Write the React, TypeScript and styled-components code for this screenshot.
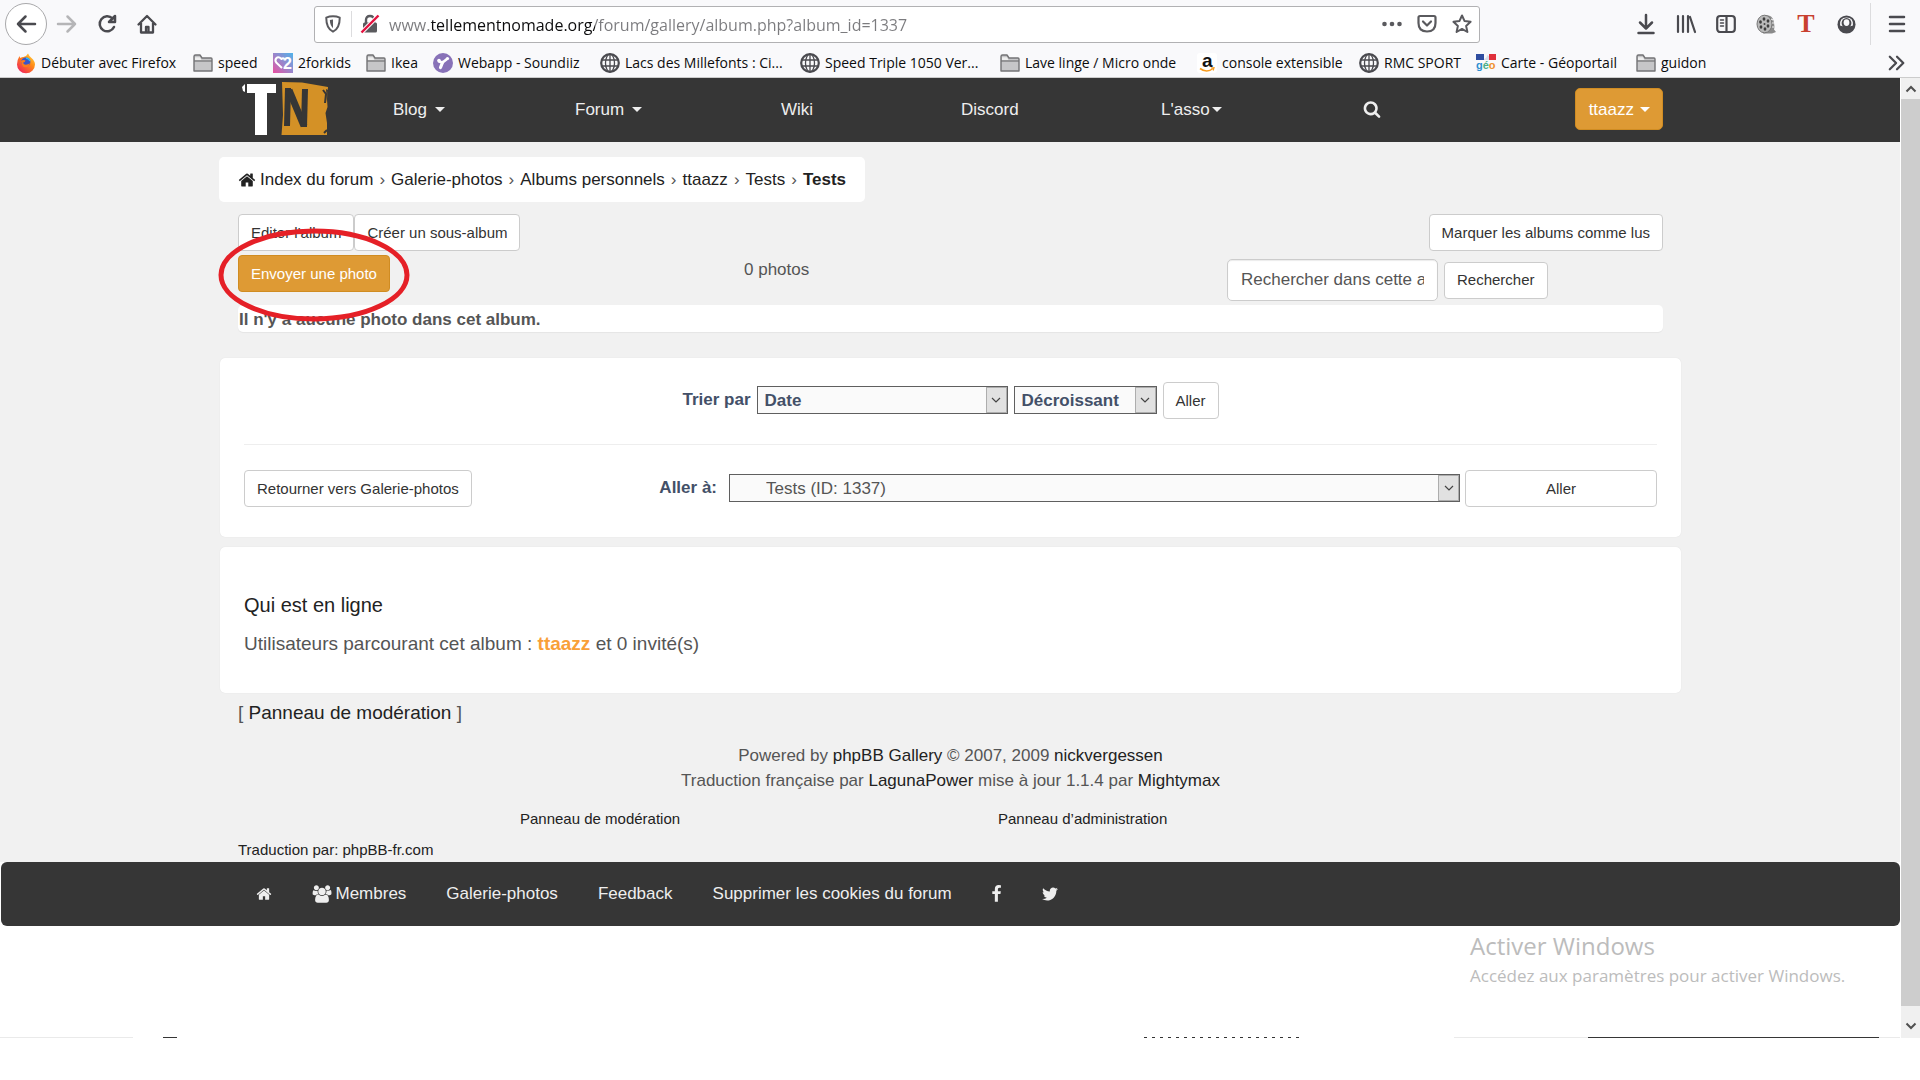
import React from "react";
import styled, { createGlobalStyle, css } from "styled-components";

const sans = `"Liberation Sans", Arial, sans-serif`;
const ui = `"Open Sans", "Noto Sans", sans-serif`;

const GlobalStyle = createGlobalStyle`
  *, *::before, *::after { box-sizing: border-box; }
  body { margin: 0; background: #fff; font-family: ${sans}; font-size: 17px; line-height: 25px; color: #555; }
  a { color: #222; text-decoration: none; }
  button, input, select { font: inherit; margin: 0; }
  svg { display: block; flex: none; overflow: visible; }
`;

/* ---------- Browser chrome ---------- */

const Chrome = styled.header`
  background: #f9f9fb;
  border-bottom: 1px solid #ccc;
  font-family: ${ui};
  color: #0c0c0d;
`;

const Toolbar = styled.div`
  display: flex;
  align-items: center;
  height: 48px;
  padding: 0 3px 0 5px;
`;

const ToolButton = styled.button<{ $dim?: boolean }>`
  display: flex;
  align-items: center;
  justify-content: center;
  flex: none;
  width: 40px;
  height: 40px;
  padding: 0;
  border: 0;
  background: none;
  color: ${(p) => (p.$dim ? "#b5b5b7" : "#4a4a4f")};
`;

const BackButton = styled(ToolButton)`
  width: 42px;
  height: 42px;
  border: 1px solid #a9a9ab;
  border-radius: 50%;
  background: #fff;
`;

const AddressBar = styled.div`
  display: flex;
  align-items: center;
  flex: 1;
  height: 37px;
  margin: 0 146px 0 147px;
  border: 1px solid #b1b1b3;
  border-radius: 3px;
  background: #fff;
  color: #5a5a5e;
  padding: 0 7px 0 9px;
`;

const AddressDivider = styled.span`
  width: 1px;
  height: 26px;
  margin: 0 8px 0 9px;
  background: #dcdcde;
`;

const AddressInput = styled.input`
  flex: 1;
  min-width: 0;
  height: 32px;
  margin-left: 9px;
  padding: 2px 0 0;
  border: 0;
  outline: 0;
  font-size: 16px;
  background: linear-gradient(90deg, #7b7b7e 42px, #0c0c0d 42px, #0c0c0d 206px, #7b7b7e 206px);
  -webkit-background-clip: text;
  background-clip: text;
  color: transparent;
`;

const AddressActions = styled.div`
  display: flex;
  gap: 15px;
`;

const ToolDivider = styled.span`
  width: 1px;
  height: 42px;
  margin: 0 6px 0 4px;
  background: #dcdcde;
`;

const RedMark = styled.span`
  font: bold 26px/26px "Liberation Serif", serif;
  color: #c8402f;
`;

const Bookmarks = styled.nav`
  display: grid;
  grid-template-columns: 177px 80px 93px 67px 167px 200px 200px 197px 162px 117px 160px 1fr 34px;
  align-items: center;
  height: 29px;
  padding-left: 16px;
  font-size: 14px;
  line-height: 20px;
`;

const Bookmark = styled.a`
  display: flex;
  align-items: center;
  gap: 5px;
  color: #0c0c0d;
  white-space: nowrap;
`;

const MoreBookmarks = styled.button`
  padding: 0 0 0 2px;
  border: 0;
  background: none;
  color: #4a4a4f;
`;

/* ---------- Page frame ---------- */

const Viewport = styled.div`
  display: flex;
`;

const Page = styled.div`
  flex: 1;
  min-width: 0;
`;

const Scrollbar = styled.div`
  display: flex;
  flex-direction: column;
  width: 20px;
  border-left: 1px solid #fff;
  background: #f0f0f0;
  color: #505050;
`;

const ScrollArrow = styled.button<{ $tall?: boolean }>`
  display: flex;
  align-items: center;
  justify-content: center;
  height: ${(p) => (p.$tall ? 32 : 21)}px;
  padding: ${(p) => (p.$tall ? 8 : 0)}px 0 0;
  border: 0;
  background: none;
  color: inherit;
`;

const ScrollThumb = styled.div`
  flex: 1;
  background: #cdcdcd;
`;

const Container = styled.div`
  max-width: 1462px;
  margin: 0 auto;
`;

const Inset = styled.div`
  padding: 0 18px 0 19px;
`;

/* ---------- Navigation ---------- */

const NavBar = styled.div`
  background: #363636;
`;

const NavGrid = styled(Container)`
  display: grid;
  grid-template-columns: 151px 182px 206px 180px 200px 202px 1fr auto;
  align-items: center;
  height: 64px;
  padding: 0 18px 2px 23px;
`;

const NavLink = styled.a<{ $tight?: boolean }>`
  display: flex;
  align-items: center;
  gap: ${(p) => (p.$tight ? 2 : 8)}px;
  color: #eee;
`;

const Caret = styled.span`
  border: 5px solid transparent;
  border-top-color: currentColor;
  border-bottom: 0;
`;

const UserButton = styled.button`
  display: flex;
  align-items: center;
  gap: 6px;
  height: 42px;
  padding: 0 12px 0 13px;
  border: 1px solid #d08c22;
  border-radius: 5px;
  background: #de9a34;
  color: #fff;
`;

/* ---------- Content ---------- */

const Main = styled.main`
  background: #f1f1f1;
  padding-top: 15px;
`;

const Breadcrumb = styled.nav`
  display: flex;
  align-items: center;
  gap: 6px;
  width: fit-content;
  height: 45px;
  padding: 0 19px;
  border-radius: 5px;
  background: #fff;
`;

const CrumbHome = styled.a`
  display: flex;
  align-items: center;
  gap: 4px;
`;

const Actions = styled(Inset)`
  position: relative;
  padding-top: 12px;
`;

const Bar = styled.div`
  display: flex;
`;

const Button = styled.button<{ $primary?: boolean; $wide?: boolean }>`
  flex: none;
  height: 37px;
  padding: 0 12px;
  font-size: 15px;
  line-height: 20px;
  border: 1px solid ${(p) => (p.$primary ? "#d08c22" : "#ccc")};
  border-radius: 4px;
  background: ${(p) => (p.$primary ? "#de9a34" : "#fff")};
  color: ${(p) => (p.$primary ? "#fff" : "#333")};
  ${(p) => p.$wide && css`width: 192px;`}
`;

const PushRight = styled.div`
  margin-left: auto;
`;

const SearchRow = styled.div`
  display: grid;
  grid-template-columns: 506fr 483fr 436fr;
  padding-top: 4px;
  height: 54px;
`;

const Count = styled.span`
  padding-top: 2px;
`;

const SearchForm = styled.form`
  display: flex;
  align-items: center;
  gap: 6px;
  height: 42px;
  margin-top: 4px;
`;

const SearchInput = styled.input`
  width: 211px;
  height: 42px;
  padding: 0 13px;
  border: 1px solid #ccc;
  border-radius: 5px;
  background: #fff;
  box-shadow: inset 0 1px 1px rgba(0, 0, 0, 0.08);
  color: #555;
  &::placeholder { color: #555; opacity: 1; }
`;

const Notice = styled.p`
  margin: 0 0 26px;
  padding: 2px 1px 0;
  border-radius: 5px;
  background: #fff;
  box-shadow: 0 1px 1px rgba(0, 0, 0, 0.05);
  font-weight: bold;
`;

const Highlight = styled.svg`
  position: absolute;
  left: -1px;
  top: 25px;
  pointer-events: none;
`;

const Panel = styled.section`
  margin: 0 0 10px 1px;
  padding: 24px 24px 30px;
  border-radius: 5px;
  background: #fff;
  box-shadow: 0 0 1px rgba(0, 0, 0, 0.12);
`;

const OnlinePanel = styled(Panel)`
  margin-bottom: 9px;
  padding: 43px 24px 34px;
`;

const SortForm = styled.form`
  display: flex;
  justify-content: center;
  align-items: center;
  gap: 6px;
`;

const Rule = styled.hr`
  height: 1px;
  margin: 25px 0;
  border: 0;
  background: #eee;
`;

const JumpForm = styled.form`
  display: flex;
  align-items: center;
  gap: 5px;
`;

const Label = styled.label`
  margin-bottom: 2px;
  color: #435068;
  font-weight: bold;
`;

const JumpLabel = styled(Label)`
  margin: 0 7px 2px auto;
`;

const SelectBox = styled.span<{ $width: number }>`
  display: flex;
  position: relative;
  flex: 0 1 ${(p) => p.$width}px;
  height: 28px;
  margin-bottom: 1px;
  border: 1px solid #5f5f5f;
  background: #fafafa;
`;

const Select = styled.select<{ $indent?: boolean }>`
  appearance: none;
  width: 100%;
  padding: 0 24px 0 ${(p) => (p.$indent ? 36 : 7)}px;
  border: 0;
  background: none;
  color: ${(p) => (p.$indent ? "#555" : "#435068")};
  font-weight: ${(p) => (p.$indent ? "normal" : "bold")};
`;

const SelectArrow = styled.span`
  position: absolute;
  top: 0;
  right: 0;
  display: flex;
  align-items: center;
  justify-content: center;
  width: 21px;
  height: 26px;
  border: 1px solid #adadad;
  background: #e1e1e1;
  color: #444;
  pointer-events: none;
`;

const OnlineTitle = styled.h3`
  margin: 0 0 9px;
  font-size: 20px;
  line-height: 30px;
  font-weight: normal;
  color: #222;
`;

const OnlineText = styled.p`
  margin: 0;
  font-size: 19px;
  line-height: 30px;
`;

const UserName = styled.a`
  color: #f9a038;
  font-weight: bold;
`;

const Moderation = styled.p`
  margin: 0 0 19px;
  font-size: 19px;
  line-height: 22px;
`;

const Credits = styled.p`
  margin: 0 0 15px;
  text-align: center;
`;

const PanelLinks = styled.div`
  display: grid;
  grid-template-columns: 478px 1fr;
  margin-bottom: 9px;
  padding-left: 282px;
  font-size: 15px;
  line-height: 22px;
`;

const Translation = styled.p`
  margin: 0;
  padding-bottom: 1px;
  font-size: 15px;
  line-height: 22px;
  color: #222;
`;

/* ---------- Footer ---------- */

const Footer = styled.footer`
  margin-left: 1px;
  border-radius: 6px;
  background: #363636;
`;

const FooterLinks = styled(Container)`
  display: flex;
  align-items: center;
  gap: 40px;
  height: 64px;
  padding: 0 36px 1px;
`;

const FooterLink = styled.a`
  display: flex;
  align-items: center;
  gap: 4px;
  color: #eee;
`;

const Watermark = styled.aside`
  width: 430px;
  margin: 2px 0 49px auto;
  font-family: ${ui};
  color: #bcbcbc;
`;

const WatermarkTitle = styled.div`
  font-size: 24px;
  line-height: 36px;
`;

const WatermarkText = styled.div`
  font-size: 17px;
  line-height: 24px;
`;

const Edge = styled.div`
  display: grid;
  grid-template-columns: 133px 30px 14px 967px 160px 150px 134px 291px 1fr;
  height: 1px;
`;

const EdgePart = styled.span<{ $tone?: "light" | "dark" | "dots" }>`
  background: ${(p) =>
    p.$tone === "dark"
      ? "#363636"
      : p.$tone === "light"
        ? "#eaeaea"
        : p.$tone === "dots"
          ? "repeating-linear-gradient(90deg, #333 0 3px, #fff 3px 8px)"
          : "none"};
`;

/* ---------- Icons ---------- */

const FaIcon = ({ d, w = 18, h = 18, box = "0 0 1792 1792" }: { d: string; w?: number; h?: number; box?: string }) => (
  <svg width={w} height={h} viewBox={box} fill="currentColor" aria-hidden="true">
    <path d={d} />
  </svg>
);

const HOME =
  "M1472 992v480q0 26-19 45t-45 19h-384v-384h-256v384h-384q-26 0-45-19t-19-45v-480q0-1 .5-3t.5-3l575-474 575 474q1 2 1 6zm223-69l-62 74q-8 9-21 11h-3q-13 0-21-7l-692-577-692 577q-12 8-24 7-13-2-21-11l-62-74q-8-10-7-23.5t11-21.5l719-599q32-26 76-26t76 26l244 204v-195q0-14 9-23t23-9h192q14 0 23 9t9 23v408l219 182q10 8 11 21.5t-7 23.5z";
const SEARCH =
  "M1216 832q0-185-131.5-316.5t-316.5-131.5-316.5 131.5-131.5 316.5 131.5 316.5 316.5 131.5 316.5-131.5 131.5-316.5zm512 832q0 52-38 90t-90 38q-54 0-90-38l-343-342q-179 124-399 124-143 0-273.5-55.5t-225-150-150-225-55.5-273.5 55.5-273.5 150-225 225-150 273.5-55.5 273.5 55.5 225 150 150 225 55.5 273.5q0 220-124 399l343 343q37 37 37 90z";
const TWITTER =
  "M1684 408q-67 98-162 167 1 14 1 42 0 130-38 259.5t-115.5 248.5-184.5 210.5-258 146-323 54.5q-271 0-496-145 35 4 78 4 225 0 401-138-105-2-188-64.5t-114-159.5q33 5 61 5 43 0 85-11-112-23-185.5-111.5t-73.5-205.5v-4q68 38 146 41-66-44-105-115t-39-154q0-88 44-163 121 149 294.5 238.5t371.5 99.5q-8-38-8-74 0-134 94.5-228.5t228.5-94.5q140 0 236 102 109-21 205-78-37 115-142 178 93-10 186-50z";
const FACEBOOK =
  "M1343 12v264h-157q-86 0-116 36t-30 108v189h293l-39 296h-254v759h-306v-759h-255v-296h255v-218q0-186 104-288.5t277-102.5q147 0 228 12z";
const USERS =
  "M657 896q-162 5-265 128h-134q-82 0-138-40.5t-56-118.5q0-353 124-353 6 0 43.5 21t97.5 42.5 119 21.5q67 0 133-23-5 37-5 66 0 159 93 288zm1071 637q0 120-73 189.5t-194 69.5h-874q-121 0-194-69.5t-73-189.5q0-53 3.5-103.5t14-109 26.5-108.5 43-97.5 62-81 85.5-53.5 111.5-20q10 0 43 21.5t73 48 107 48 135 21.5 135-21.5 107-48 73-48 43-21.5q61 0 111.5 20t85.5 53.5 62 81 43 97.5 26.5 108.5 14 109 3.5 103.5zm-1024-1277q0 106-75 181t-181 75-181-75-75-181 75-181 181-75 181 75 75 181zm704 384q0 159-112.5 271.5t-271.5 112.5-271.5-112.5-112.5-271.5 112.5-271.5 271.5-112.5 271.5 112.5 112.5 271.5zm576 225q0 78-56 118.5t-138 40.5h-134q-103-124-265-128 93-129 93-288 0-29-5-66 66 23 133 23 59 0 119-21.5t97.5-42.5 43.5-21q124 0 124 353zm-128-609q0 106-75 181t-181 75-181-75-75-181 75-181 181-75 181 75 75 181z";

const Line = ({ children, size = 20, width = 2.5 }: { children: React.ReactNode; size?: number; width?: number }) => (
  <svg
    width={size}
    height={size}
    viewBox="0 0 20 20"
    fill="none"
    stroke="currentColor"
    strokeWidth={width}
    strokeLinecap="round"
    strokeLinejoin="round"
    aria-hidden="true"
  >
    {children}
  </svg>
);

const FolderIcon = () => (
  <svg width="20" height="20" viewBox="0 0 20 20" aria-hidden="true">
    <path d="M1 18V3.500Q1 2 2.500 2H7l2 3h9q1 0 1 1v12z" fill="#c6c6c8" stroke="#737375" strokeWidth="1.4" strokeLinejoin="round" />
    <path d="M1 8h18" stroke="#737375" strokeWidth="1.2" />
    <path d="M2 4.200h5l1.500 2.800H2z" fill="#eee" />
  </svg>
);

const GlobeIcon = () => (
  <svg width="20" height="20" viewBox="0 0 20 20" fill="none" stroke="#4a4a4f" strokeWidth="1.3" aria-hidden="true">
    <circle cx="10" cy="10" r="8.800" strokeWidth="2.200" />
    <ellipse cx="10" cy="10" rx="4.500" ry="8.800" />
    <path d="M2 7h16M2 13h16M10 1v18" />
  </svg>
);

const FirefoxIcon = () => (
  <svg width="20" height="20" viewBox="0 0 20 20" aria-hidden="true">
    <defs>
      <linearGradient id="fx" x1="1" y1="0" x2="0.200" y2="1">
        <stop offset="0" stopColor="#ffe14a" />
        <stop offset="0.450" stopColor="#ff8a16" />
        <stop offset="1" stopColor="#f0215a" />
      </linearGradient>
    </defs>
    <path d="M12 .5q1 2.500 3.500 4.500 3.500 3 3.500 6.500A8.800 8.500 0 0 1 1 11.500Q1 7 3.500 3q.2 1.500 1 2 1.500-1.200 3-1Q10.500 3.500 12 .5z" fill="url(#fx)" />
    <circle cx="9.800" cy="9" r="4.600" fill="#3a55c8" />
    <path d="M5 8q2-1.500 4.500-.5Q9 9.500 7 9.800q1 2.500 4 1.800 2-.4 2.700-1.800-.3 4.500-4.200 4.500T5 8z" fill="#ff7a1c" />
    <path d="M10 5q3 .5 4 3" stroke="#20c5ff" strokeWidth="1.400" fill="none" />
  </svg>
);

const KidsIcon = () => (
  <svg width="20" height="20" viewBox="0 0 20 20" aria-hidden="true">
    <defs>
      <linearGradient id="kids" x1="1" y1="0" x2="0" y2="1">
        <stop offset="0" stopColor="#4fb4ea" />
        <stop offset="0.500" stopColor="#9a86cc" />
        <stop offset="1" stopColor="#ea4fa0" />
      </linearGradient>
    </defs>
    <rect width="20" height="20" fill="url(#kids)" />
    <path d="M9 15L3.200 9.500Q1.500 7 3.500 5T8.500 6q1.500-1.500 3 0" fill="none" stroke="#fff" strokeWidth="2" strokeLinejoin="round" />
    <text x="10" y="16" fontFamily="Liberation Sans" fontWeight="bold" fontSize="16" fill="#fff">2</text>
  </svg>
);

const SoundiizIcon = () => (
  <svg width="20" height="20" viewBox="0 0 20 20" aria-hidden="true">
    <circle cx="10" cy="10" r="10" fill="#8872b8" />
    <path d="M6 8.500L9.500 9.500L14 6" fill="none" stroke="#fff" strokeWidth="2.600" strokeLinecap="round" />
    <path d="M9.500 9.500L7.500 14.500" fill="none" stroke="#fff" strokeWidth="3.200" strokeLinecap="round" />
    <circle cx="14.500" cy="5.500" r="1.600" fill="#fff" />
    <circle cx="6" cy="7.500" r="1.800" fill="#fff" />
  </svg>
);

const AmazonIcon = () => (
  <svg width="20" height="20" viewBox="0 0 20 20" aria-hidden="true">
    <rect width="20" height="20" rx="3" fill="#fff" />
    <text x="5" y="14" fontFamily="Liberation Sans" fontWeight="bold" fontSize="19" fill="#111">a</text>
    <path d="M3 15.500q7 5 13 0" stroke="#f79a1c" strokeWidth="1.600" fill="none" />
    <path d="M14 15l3-.3-.8 2.800" stroke="#f79a1c" strokeWidth="1.200" fill="none" />
  </svg>
);

const GeoIcon = () => (
  <svg width="20" height="20" viewBox="0 0 20 20" aria-hidden="true">
    <rect x="0" y="1" width="8" height="6" fill="#2f4da0" />
    <rect x="13" y="1" width="7" height="6" fill="#e0303c" />
    <path d="M8 6q3-1 3-4l2 1v4H8z" fill="#d9dde8" />
    <text y="16" fontFamily="Liberation Sans" fontWeight="bold" fontSize="11">
      <tspan fill="#2d8fd0">g</tspan>
      <tspan fill="#4ab08a">é</tspan>
      <tspan fill="#f0922c">o</tspan>
    </text>
  </svg>
);

const FilmIcon = () => (
  <svg width="20" height="20" viewBox="0 0 20 20" aria-hidden="true">
    <path d="M8 1.500q8-1 9.500 5t.5 9l2 2.500-4 1.500H7z" fill="#8b8b8b" />
    <ellipse cx="8.500" cy="10" rx="7.500" ry="8.800" fill="#b9b9b9" stroke="#777" strokeWidth="1" />
    {[[8, 5], [4.5, 8], [5, 13], [9, 15], [12, 12], [12, 7]].map(([x, y]) => (
      <ellipse key={`${x}-${y}`} cx={x} cy={y} rx="1.400" ry="1.800" fill="#3d3d3d" />
    ))}
    <circle cx="8.500" cy="10" r="1" fill="#444" />
    <path d="M15 5l2 1M16 9h2M16 13h2" stroke="#eee" strokeWidth="1.200" />
  </svg>
);

const Logo = () => (
  <svg width="87" height="54" viewBox="0 0 87 54" role="img" aria-label="TN">
    <rect x="5" y="2" width="29" height="9" fill="#fff" />
    <rect x="13" y="2" width="12" height="51" fill="#fff" />
    <path d="M3 2l-3 3 1 4 2 1z" fill="#fff" />
    <path d="M40 0l20 .5L86 5l-1 12 .5 8-2 6 1.500 10v12H39.500l1.500-20z" fill="#d49126" />
    <g stroke="#363636" fill="none">
      <path d="M46 6l-1 38" strokeWidth="6" />
      <path d="M47 8l15 36" strokeWidth="7" />
      <path d="M63 7l-1 38" strokeWidth="6" />
      <path d="M81 8l3 4-1 9" strokeWidth="2" />
      <path d="M82 51l3-3" strokeWidth="2" />
    </g>
    <path d="M84 7l2 1-1 12z" fill="#363636" />
  </svg>
);

const Chevron = ({ up }: { up?: boolean }) => (
  <svg width="12" height="8" viewBox="0 0 12 8" fill="none" stroke="currentColor" strokeWidth="2" aria-hidden="true">
    <path d={up ? "M1.500 6.500L6 2l4.500 4.500" : "M1.500 1.500L6 6l4.500-4.500"} />
  </svg>
);

const ThinChevron = () => (
  <svg width="10" height="7" viewBox="0 0 10 7" fill="none" stroke="currentColor" strokeWidth="1.200" aria-hidden="true">
    <path d="M1 1l4 4 4-4" />
  </svg>
);

/* ---------- Data ---------- */

const bookmarks: [string, React.FC][] = [
  ["Débuter avec Firefox", FirefoxIcon],
  ["speed", FolderIcon],
  ["2forkids", KidsIcon],
  ["Ikea", FolderIcon],
  ["Webapp - Soundiiz", SoundiizIcon],
  ["Lacs des Millefonts : Ci...", GlobeIcon],
  ["Speed Triple 1050 Ver...", GlobeIcon],
  ["Lave linge / Micro onde", FolderIcon],
  ["console extensible", AmazonIcon],
  ["RMC SPORT", GlobeIcon],
  ["Carte - Géoportail", GeoIcon],
  ["guidon", FolderIcon],
];

const crumbs = ["Galerie-photos", "Albums personnels", "ttaazz", "Tests"];

const BrowserChrome = () => (
  <Chrome>
    <Toolbar>
      <BackButton aria-label="Précédent">
        <Line><path d="M19 10H2M9.500 2.500L2 10l7.500 7.500" /></Line>
      </BackButton>
      <ToolButton $dim aria-label="Suivant">
        <Line><path d="M1 10h17M10.500 2.500L18 10l-7.500 7.500" /></Line>
      </ToolButton>
      <ToolButton aria-label="Actualiser">
        <Line><path d="M15.500 4.500A7.500 7.500 0 1 0 17 13M18 2v6h-6z" /></Line>
      </ToolButton>
      <ToolButton aria-label="Accueil">
        <Line width={2.3}>
          <path d="M1.500 10.500L10 2l8.500 8.500M4 9v9.500h12V9M9 18v-5h2.500v5" />
        </Line>
      </ToolButton>
      <AddressBar>
        <Line size={18} width={2.2}>
          <path d="M10 1.500q4 0 7.500 1.500 0 12-7.500 15.500Q2.500 15 2.500 3 6 1.500 10 1.500z" />
          <path d="M10 5q-2 0-3.500.6.200 6 3.500 9z" fill="currentColor" strokeWidth="0" />
        </Line>
        <AddressDivider />
        <svg width="20" height="20" viewBox="0 0 20 20" aria-hidden="true">
          <path d="M6 9V6q0-4 4-4t4 4v3" fill="none" stroke="#5a5a5e" strokeWidth="2.400" />
          <rect x="3" y="8.500" width="14" height="10" rx="1.500" fill="#5a5a5e" />
          <path d="M1.500 18.500L18.500 1.500" stroke="#fff" strokeWidth="4.500" />
          <path d="M1.500 18.500L18.500 1.500" stroke="#e2123f" strokeWidth="2.400" />
        </svg>
        <AddressInput aria-label="Adresse" defaultValue="www.tellementnomade.org/forum/gallery/album.php?album_id=1337" />
        <AddressActions>
          <svg width="20" height="20" viewBox="0 0 20 20" fill="currentColor" aria-hidden="true">
            <circle cx="2.500" cy="10" r="2.300" /><circle cx="10" cy="10" r="2.300" /><circle cx="17.500" cy="10" r="2.300" />
          </svg>
          <Line width={2.2}>
            <path d="M3 2h14q1.500 0 1.500 1.500V9q0 8.500-8.500 8.500T1.500 9V3.500Q1.500 2 3 2z" />
            <path d="M6 7.500l4 4 4-4" />
          </Line>
          <Line width={2}>
            <path d="M10 1.500l2.600 5.600 6 .7-4.500 4.100 1.300 6.100-5.400-3.100L4.600 18l1.300-6.100L1.400 7.800l6-.7z" />
          </Line>
        </AddressActions>
      </AddressBar>
      <ToolButton aria-label="Téléchargements">
        <Line><path d="M10 1v13M4 8.500l6 6 6-6M2.500 19h15" /></Line>
      </ToolButton>
      <ToolButton aria-label="Bibliothèque">
        <Line><path d="M2 2v16M7 2v16M12 2v16M14 3l5 15" strokeWidth="2.200" /></Line>
      </ToolButton>
      <ToolButton aria-label="Panneau latéral">
        <Line width={2.2}>
          <rect x="1.200" y="2" width="17.600" height="16" rx="3" />
          <path d="M10.500 2v16" />
          <path d="M4.500 6h3M4.500 9h3M4.500 12h3" strokeWidth="1.500" />
        </Line>
      </ToolButton>
      <ToolButton aria-label="Vidéo"><FilmIcon /></ToolButton>
      <ToolButton aria-label="Extension"><RedMark>T</RedMark></ToolButton>
      <ToolButton aria-label="Compte">
        <svg width="19" height="19" viewBox="0 0 20 20" aria-hidden="true">
          <circle cx="10" cy="10" r="9.500" fill="#4a4a4f" />
          <path d="M3.200 11q-.8-8 6.800-8.300Q17.600 3 16.800 11l-2.800.8H6z" fill="#f9f9fb" />
          <ellipse cx="10" cy="8.500" rx="5.200" ry="5.400" fill="#4a4a4f" />
          <ellipse cx="10" cy="8" rx="3" ry="3.600" fill="#f9f9fb" />
        </svg>
      </ToolButton>
      <ToolDivider />
      <ToolButton aria-label="Menu">
        <Line><path d="M3 3h14M3 10h14M3 17h14" /></Line>
      </ToolButton>
    </Toolbar>
    <Bookmarks>
      {bookmarks.map(([label, Icon]) => (
        <Bookmark href="#" key={label}>
          <Icon />
          {label}
        </Bookmark>
      ))}
      <MoreBookmarks aria-label="Plus de marque-pages">
        <Line size={18}><path d="M2 3l7 7-7 7M10 3l7 7-7 7" /></Line>
      </MoreBookmarks>
    </Bookmarks>
  </Chrome>
);

export default function App() {
  return (
    <>
      <GlobalStyle />
      <BrowserChrome />
      <Viewport>
        <Page>
          <NavBar>
            <NavGrid as="nav">
              <a href="#"><Logo /></a>
              <NavLink href="#">Blog <Caret /></NavLink>
              <NavLink href="#">Forum <Caret /></NavLink>
              <NavLink href="#">Wiki</NavLink>
              <NavLink href="#">Discord</NavLink>
              <NavLink href="#" $tight>L'asso<Caret /></NavLink>
              <NavLink href="#" aria-label="Rechercher"><FaIcon d={SEARCH} /></NavLink>
              <UserButton>ttaazz <Caret /></UserButton>
            </NavGrid>
          </NavBar>

          <Main>
            <Container>
              <Breadcrumb>
                <CrumbHome href="#"><FaIcon d={HOME} /> Index du forum</CrumbHome>
                {crumbs.map((c) => (
                  <React.Fragment key={c}>
                    <span>›</span>
                    <a href="#">{c}</a>
                  </React.Fragment>
                ))}
                <span>›</span>
                <a href="#"><b>Tests</b></a>
              </Breadcrumb>

              <Actions>
                <Bar>
                  <Button>Editer l'album</Button>
                  <Button>Créer un sous-album</Button>
                  <PushRight><Button>Marquer les albums comme lus</Button></PushRight>
                </Bar>
                <SearchRow>
                  <div><Button $primary>Envoyer une photo</Button></div>
                  <Count>0 photos</Count>
                  <SearchForm>
                    <SearchInput aria-label="Rechercher dans cette album" placeholder="Rechercher dans cette album…" />
                    <Button type="button">Rechercher</Button>
                  </SearchForm>
                </SearchRow>
                <Notice>Il n'y a aucune photo dans cet album.</Notice>
                <Highlight width="192" height="96" viewBox="0 0 192 96" aria-hidden="true">
                  <ellipse cx="96" cy="48" rx="93" ry="44" fill="none" stroke="#e52027" strokeWidth="5" />
                </Highlight>
              </Actions>

              <Panel>
                <SortForm>
                  <Label htmlFor="sort-key">Trier par</Label>
                  <SelectBox $width={251}>
                    <Select id="sort-key"><option>Date</option></Select>
                    <SelectArrow><ThinChevron /></SelectArrow>
                  </SelectBox>
                  <SelectBox $width={143}>
                    <Select aria-label="Ordre"><option>Décroissant</option></Select>
                    <SelectArrow><ThinChevron /></SelectArrow>
                  </SelectBox>
                  <Button type="button">Aller</Button>
                </SortForm>
                <Rule />
                <JumpForm>
                  <Button type="button">Retourner vers Galerie-photos</Button>
                  <JumpLabel htmlFor="jump">Aller à:</JumpLabel>
                  <SelectBox $width={731}>
                    <Select id="jump" $indent><option>Tests (ID: 1337)</option></Select>
                    <SelectArrow><ThinChevron /></SelectArrow>
                  </SelectBox>
                  <Button type="button" $wide>Aller</Button>
                </JumpForm>
              </Panel>

              <OnlinePanel>
                <OnlineTitle>Qui est en ligne</OnlineTitle>
                <OnlineText>
                  Utilisateurs parcourant cet album : <UserName href="#">ttaazz</UserName> et 0 invité(s)
                </OnlineText>
              </OnlinePanel>

              <Inset>
                <Moderation>[ <a href="#">Panneau de modération</a> ]</Moderation>
                <Credits>
                  Powered by <a href="#">phpBB Gallery</a> © 2007, 2009 <a href="#">nickvergessen</a>
                  <br />
                  Traduction française par <a href="#">LagunaPower</a> mise à jour 1.1.4 par <a href="#">Mightymax</a>
                </Credits>
                <PanelLinks>
                  <a href="#">Panneau de modération</a>
                  <a href="#">Panneau d’administration</a>
                </PanelLinks>
                <Translation>Traduction par: <a href="#">phpBB-fr.com</a></Translation>
              </Inset>
            </Container>
          </Main>

          <Footer>
            <FooterLinks as="nav">
              <FooterLink href="#" aria-label="Accueil"><FaIcon d={HOME} w={16} /></FooterLink>
              <FooterLink href="#"><FaIcon d={USERS} w={20} box="0 0 2048 1792" /> Membres</FooterLink>
              <FooterLink href="#">Galerie-photos</FooterLink>
              <FooterLink href="#">Feedback</FooterLink>
              <FooterLink href="#">Supprimer les cookies du forum</FooterLink>
              <FooterLink href="#" aria-label="Facebook"><FaIcon d={FACEBOOK} w={9} box="450 0 900 1792" /></FooterLink>
              <FooterLink href="#" aria-label="Twitter"><FaIcon d={TWITTER} /></FooterLink>
            </FooterLinks>
          </Footer>

          <Watermark>
            <WatermarkTitle>Activer Windows</WatermarkTitle>
            <WatermarkText>Accédez aux paramètres pour activer Windows.</WatermarkText>
          </Watermark>
          <Edge>
            <EdgePart $tone="light" />
            <EdgePart />
            <EdgePart $tone="dark" />
            <EdgePart />
            <EdgePart $tone="dots" />
            <EdgePart />
            <EdgePart $tone="light" />
            <EdgePart $tone="dark" />
            <EdgePart $tone="light" />
          </Edge>
        </Page>
        <Scrollbar>
          <ScrollArrow aria-label="Défiler vers le haut"><Chevron up /></ScrollArrow>
          <ScrollThumb />
          <ScrollArrow $tall aria-label="Défiler vers le bas"><Chevron /></ScrollArrow>
        </Scrollbar>
      </Viewport>
    </>
  );
}
